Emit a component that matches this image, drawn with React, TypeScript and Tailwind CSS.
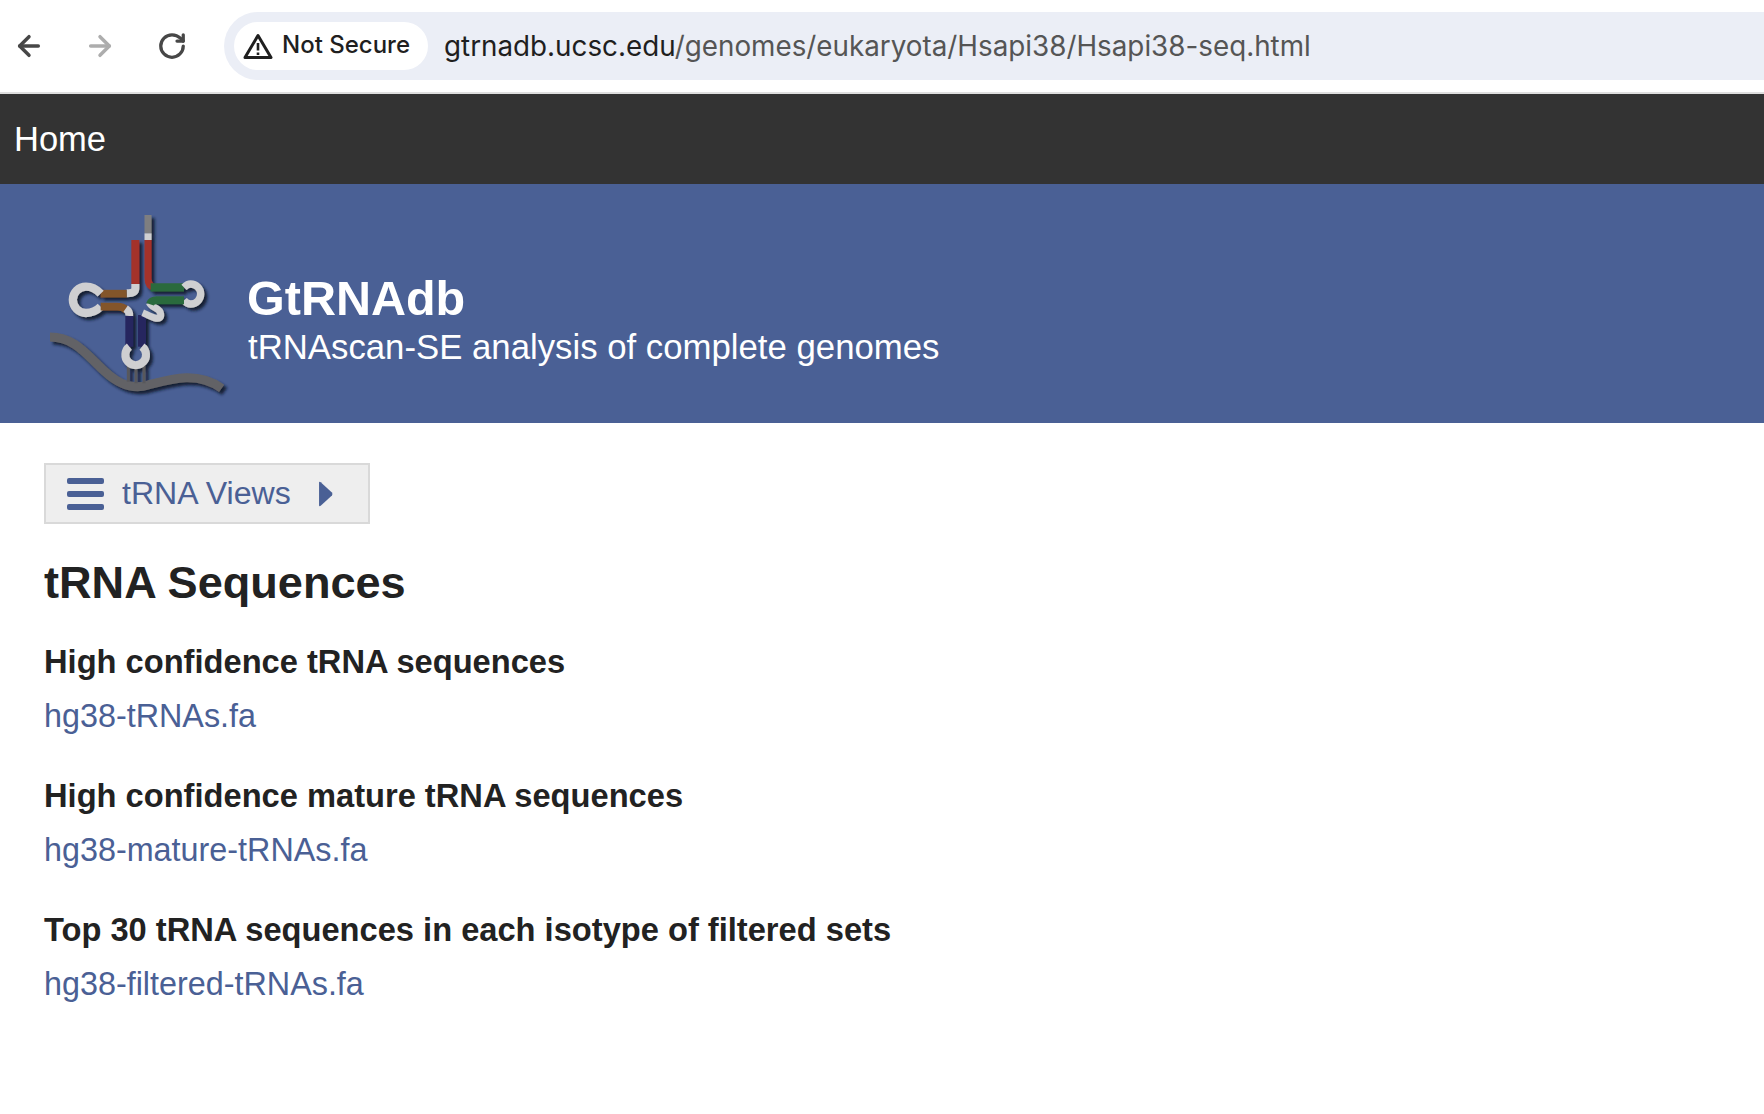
import { ArrowLeft, ArrowRight, RotateCw } from "lucide-react";

const sections = [
  { title: "High confidence tRNA sequences", file: "hg38-tRNAs.fa" },
  { title: "High confidence mature tRNA sequences", file: "hg38-mature-tRNAs.fa" },
  { title: "Top 30 tRNA sequences in each isotype of filtered sets", file: "hg38-filtered-tRNAs.fa" },
];

function Logo() {
  return (
    <svg width="220" height="210" viewBox="0 0 660 630" fill="none" className="shrink-0">
      <defs>
        <filter id="logoShadow" x="-10%" y="-10%" width="125%" height="125%">
          <feDropShadow dx="9" dy="9" stdDeviation="4" floodColor="#10162c" floodOpacity="0.9" />
        </filter>
      </defs>
      <g filter="url(#logoShadow)">
        {/* mRNA strand and the three anticodon pairs */}
        <path d="M60 411C135 411 170 465 225 515C265 552 305 570 355 555C420 538 500 512 575 565" stroke="#626266" strokeWidth="27" />
        <path d="M295 495V545M318 495V550M342 495V550" stroke="#58585c" strokeWidth="9" />
        {/* acceptor stem */}
        <path d="M354 45V100" stroke="#7e7e80" strokeWidth="21" />
        <path d="M354 100V120" stroke="#cfcfd1" strokeWidth="21" />
        <path d="M354 120V235Q354 258 372 262" stroke="#a4332a" strokeWidth="21" />
        <path d="M316 120V252" stroke="#a4332a" strokeWidth="24" />
        <path d="M316 252V265Q316 280 290 280" stroke="#cfcfd1" strokeWidth="24" />
        {/* D arm */}
        <path d="M290 281H212" stroke="#835429" strokeWidth="23" />
        <path d="M212 281C200 268 185 260 168 260A39 39 0 0 0 168 339C185 339 200 332 212 320" stroke="#cfcfd1" strokeWidth="25" />
        <path d="M212 320H262Q278 320 290 330" stroke="#835429" strokeWidth="23" />
        <path d="M287 326Q300 335 298 348" stroke="#cfcfd1" strokeWidth="23" />
        {/* anticodon arm */}
        <path d="M298 348V440" stroke="#28255f" strokeWidth="24" />
        <path d="M336 345V440" stroke="#28255f" strokeWidth="24" />
        <path d="M298 440A31 31 0 1 0 336 440" stroke="#cfcfd1" strokeWidth="24" />
        {/* variable loop */}
        <path d="M338 338C355 345 395 370 392 342C390 322 365 325 358 308" stroke="#cfcfd1" strokeWidth="21" />
        {/* T arm */}
        <path d="M362 262H462" stroke="#2c6a3c" strokeWidth="25" />
        <path d="M462 262C468 256 475 252 482 252A30 30 0 0 1 482 312C475 312 468 308 462 301" stroke="#cfcfd1" strokeWidth="22" />
        <path d="M462 301H380Q364 301 360 313" stroke="#2c6a3c" strokeWidth="24" />
      </g>
    </svg>
  );
}

export default function App() {
  return (
    <div className="h-[1114px] w-[1764px] overflow-hidden bg-white font-['Liberation_Sans',Arial,sans-serif]">
      {/* browser toolbar */}
      <div className="flex h-[94px] items-center border-b-2 border-[#dedede]">
        <div className="flex w-[224px] items-center pl-[13px]">
          <ArrowLeft size={32} strokeWidth={2.6} className="text-[#474747]" />
          <ArrowRight size={32} strokeWidth={2.6} className="ml-[39px] text-[#adadad]" />
          <RotateCw size={30} strokeWidth={2.6} className="ml-[41px] text-[#474747]" />
        </div>
        <div className="flex h-[68px] flex-1 items-center rounded-l-[34px] bg-[#ebeef6] pl-[10px]">
          <div className="flex h-[48px] w-[194px] items-center gap-[9px] rounded-full bg-white pl-[9px] font-['Inter',sans-serif] text-[24px] font-medium text-[#1f1f1f]">
            <svg width="30" height="26" viewBox="0 0 30 26" fill="none" className="shrink-0">
              <path d="M15 2.5 28 24.5H2Z" stroke="#1f1f1f" strokeWidth="3" strokeLinejoin="round" />
              <path d="M15 10v7.5M15 19.5v2.4" stroke="#1f1f1f" strokeWidth="2.6" />
            </svg>
            <span className="-mt-[2px]">Not Secure</span>
          </div>
          <div className="ml-[16px] pt-[2px] font-['Inter',sans-serif] text-[27.8px] text-[#1f1f1f]">
            gtrnadb.ucsc.edu<span className="text-[#555555]">/genomes/eukaryota/Hsapi38/Hsapi38-seq.html</span>
          </div>
        </div>
      </div>

      {/* site nav */}
      <div className="flex h-[90px] items-center bg-[#333333] pl-[14px] pt-[2px] text-[34.5px] text-white">Home</div>

      {/* banner */}
      <div className="flex h-[239px] items-start bg-[#4a6095] pl-[30px] pt-[16px] text-white">
        <Logo />
        <div className="-ml-[3px] mt-[70px]">
          <div className="text-[48.5px] font-bold leading-[56px]">GtRNAdb</div>
          <div className="ml-[1px] mt-[2px] text-[34.75px] leading-[38px]">tRNAscan-SE analysis of complete genomes</div>
        </div>
      </div>

      {/* content */}
      <div className="px-[44px] pt-[40px]">
        <div className="flex h-[61px] w-[326px] items-center border-2 border-[#d9d9d9] bg-[#eeeeee] pl-[21px] text-[32.1px] text-[#4a6095]">
          <svg width="37" height="32" viewBox="0 0 37 32" fill="#4a6095" className="shrink-0">
            <rect y="0" width="37" height="6" rx="2" />
            <rect y="13" width="37" height="6" rx="2" />
            <rect y="26" width="37" height="6" rx="2" />
          </svg>
          <span className="ml-[18px]">tRNA Views</span>
          <svg width="15" height="26" viewBox="0 0 14 24" fill="#4a6095" className="ml-[27px] shrink-0">
            <path d="M1 1.5Q1 0 2.5 1L13 10.5Q14 12 13 13.5L2.5 23Q1 24 1 22.5Z" />
          </svg>
        </div>

        <h1 className="mt-[30px] text-[45.1px] font-bold leading-[58px] text-[#222222]">tRNA Sequences</h1>

        <div className="mt-[30px] flex flex-col gap-[40px]">
          {sections.map(s => (
            <div key={s.file}>
              <h3 className="text-[32.65px] font-bold leading-[40px] text-[#222222]">{s.title}</h3>
              <a className="mt-[14px] block text-[32.35px] leading-[40px] text-[#4a6095]">{s.file}</a>
            </div>
          ))}
        </div>
      </div>
    </div>
  );
}
